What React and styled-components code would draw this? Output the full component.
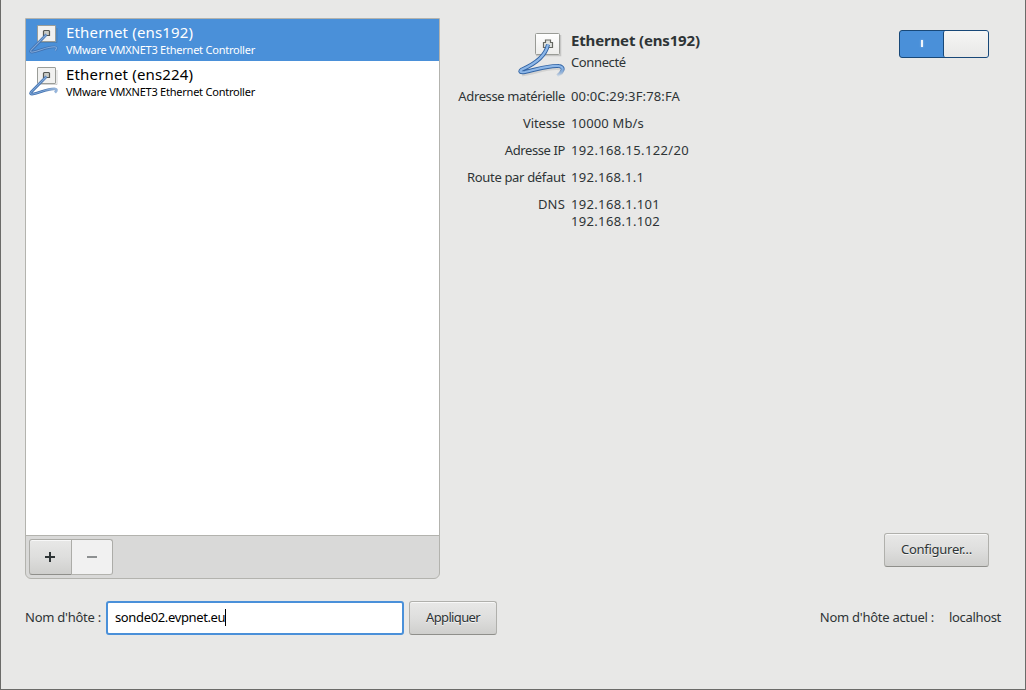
import React from "react";
import styled, { createGlobalStyle } from "styled-components";

const GlobalStyle = createGlobalStyle`
  *, *::before, *::after { box-sizing: border-box; }
  body { margin: 0; background: #e8e8e7; }
`;

const Window = styled.main`
  display: flex;
  flex-direction: column;
  width: 1026px;
  height: 690px;
  padding: 18px 24px 0;
  border: 1px solid #6b6b69;
  border-top: 0;
  background: #e8e8e7;
  color: #2e3436;
  font: 13px/17px "Noto Sans", sans-serif;
  white-space: nowrap;
`;

const Text = styled.span`
  letter-spacing: ${(p) => p.$track || 0}px;
`;

const Columns = styled.div`
  display: flex;
  height: 561px;
`;

const DevicePanel = styled.section`
  display: flex;
  flex-direction: column;
  width: 415px;
  border: 1px solid #b3b3ae;
  border-radius: 0 0 6px 6px;
  background: #d9d9d8;
  overflow: hidden;
`;

const DeviceList = styled.ul`
  flex: 1;
  margin: 0;
  padding: 0;
  list-style: none;
  background: #fff;
`;

const DeviceRow = styled.li`
  display: flex;
  align-items: center;
  gap: 6px;
  height: 42px;
  padding-left: 2px;
  background: ${(p) => (p.$selected ? "#4a90d9" : "#fff")};
  color: ${(p) => (p.$selected ? "#fff" : "#000")};
`;

const DeviceText = styled.div`
  display: flex;
  flex-direction: column;
  padding-bottom: 1px;
`;

const DeviceName = styled(Text)`
  font-size: 15px;
  line-height: 19px;
`;

const DeviceModel = styled(Text)`
  font-size: 11px;
  line-height: 15px;
`;

const Toolbar = styled.div`
  display: flex;
  height: 43px;
  padding: 3px;
  border-top: 1px solid #b3b3ae;
`;

const ToolButton = styled.button`
  display: flex;
  align-items: center;
  justify-content: center;
  width: ${(p) => (p.disabled ? 41 : 43)}px;
  height: 36px;
  padding: 0 ${(p) => (p.disabled ? 0 : 2)}px 0 0;
  border: 1px solid #acaca8;
  border-bottom-color: ${(p) => (p.disabled ? "#b3b3ae" : "#8f8f8b")};
  border-left-width: ${(p) => (p.disabled ? 0 : 1)}px;
  border-radius: ${(p) => (p.disabled ? "0 3px 3px 0" : "3px 0 0 3px")};
  background: ${(p) => (p.disabled ? "#f1f1f1" : "linear-gradient(#e8e8e7, #dededd 50%, #cfcfcd)")};
  box-shadow: ${(p) => (p.disabled ? "none" : "inset 0 1px #f8f8f8")};
  color: ${(p) => (p.disabled ? "#8d9091" : "#2e3436")};
`;

const Details = styled.section`
  display: flex;
  flex: 1;
  flex-direction: column;
  padding: 11px 12px 12px 18px;
`;

const DetailsHeader = styled.header`
  display: flex;
  height: 48px;
  padding-left: 59px;
`;

const Heading = styled.div`
  display: flex;
  flex: 1;
  flex-direction: column;
  padding: 1px 0 0 6px;
`;

const Title = styled(Text)`
  font-size: 15px;
  font-weight: 700;
  line-height: 20px;
`;

const Status = styled(Text)`
  line-height: 24px;
`;

const Switch = styled.button`
  display: flex;
  width: 90px;
  height: 28px;
  margin-top: 1px;
  padding: 0;
  border: 1px solid #184878;
  border-radius: 3px;
  background: #4a90d9;
`;

const SwitchMark = styled.span`
  display: flex;
  flex: 1;
  align-items: center;
  justify-content: center;
  height: 100%;
  padding: 0 0 1px;
  &::before {
    content: "";
    width: 2px;
    height: 7px;
    background: #f0f6fc;
    box-shadow: 0 0 2px #9fc4ec;
  }
`;

const SwitchKnob = styled.span`
  width: 45px;
  height: 100%;
  border-left: 1px solid #184878;
  border-radius: 2px;
  background: linear-gradient(#f6f6f5, #e8e8e7);
`;

const Properties = styled.dl`
  display: grid;
  grid-template-columns: 107px auto;
  column-gap: 6px;
  row-gap: 10px;
  margin: 11px 0 0;
  justify-content: start;
`;

const Label = styled.dt`
  display: flex;
  justify-content: flex-end;
`;

const Value = styled.dd`
  display: flex;
  flex-direction: column;
  margin: 0;
`;

const Button = styled.button`
  width: ${(p) => p.$width}px;
  height: 34px;
  padding: 0 0 1px;
  border: 1px solid #b0b0ac;
  border-bottom-color: #8f8f8b;
  border-radius: 3px;
  background: linear-gradient(#e8e8e7, #dededd 50%, #cfcfcd);
  box-shadow: inset 0 1px #f8f8f8;
  color: #2e3436;
  font: inherit;
  text-shadow: 0 1px #f3f3f3;
`;

const ConfigureArea = styled.div`
  display: flex;
  justify-content: flex-end;
  margin-top: auto;
`;

const HostBar = styled.footer`
  display: flex;
  align-items: center;
  height: 34px;
  margin-top: 22px;
`;

const HostLabel = styled.label`
  width: 81px;
  padding-bottom: 2px;
`;

const HostEntry = styled.div`
  display: flex;
  align-items: center;
  width: 298px;
  height: 34px;
  margin-right: 5px;
  padding: 0 0 1px 7px;
  border: 2px solid #4a90d9;
  border-radius: 3px;
  background: #fff;
  color: #000;
`;

const Caret = styled.span`
  width: 1px;
  height: 17px;
  background: #000;
`;

const CurrentHost = styled.div`
  display: flex;
  gap: 15px;
  margin-left: auto;
  padding-bottom: 2px;
`;

function SmallEthernetIcon({ id }) {
  const cable = "M18.500 10.500L3 26.200Q1.500 28.500 5 28C12 26.500 20 22.500 26.500 22.800Q30.500 23.200 27 26.500";
  return (
    <svg width="32" height="32" viewBox="0 0 32 32" fill="none">
      <defs>
        <linearGradient id={id} x1="14" y1="0" x2="30" y2="0" gradientUnits="userSpaceOnUse">
          <stop stopColor="#3f6fae" />
          <stop offset="1" stopColor="#3f6fae" stopOpacity=".45" />
        </linearGradient>
      </defs>
      <path d="M11 18.500h18V4" stroke="#555" strokeOpacity=".25" />
      <rect x="9.500" y="1.500" width="18" height="16" rx=".5" fill="#f1f1f0" stroke="#9b9d98" />
      <path d="M15.500 11.500v-4.500l1-.5h4l1 .5v4.500z" fill="#c9cbc6" stroke="#555753" strokeWidth="1.200" />
      <path d={cable} stroke={`url(#${id})`} strokeWidth="2.700" strokeLinejoin="round" />
      <path d={cable} stroke="#8fb5e2" strokeOpacity=".8" strokeWidth="1.100" strokeLinejoin="round" />
    </svg>
  );
}

function EthernetIcon() {
  const cable = "M31 15.500C29 25.500 20 34 5 40.500C2 42.500 3 43.800 8 43C20 40.500 32 36 42 37";
  const tail = "M42 37C48 38 46 43 40.500 47";
  return (
    <svg width="48" height="48" viewBox="0 0 48 48" fill="none">
      <defs>
        <linearGradient id="plate" x1="0" y1="0" x2="0" y2="1">
          <stop stopColor="#fff" />
          <stop offset="1" stopColor="#ececea" />
        </linearGradient>
        <linearGradient id="tail-edge" x1="0" y1="39" x2="0" y2="47" gradientUnits="userSpaceOnUse">
          <stop stopColor="#3465a4" />
          <stop offset="1" stopColor="#3465a4" stopOpacity="0" />
        </linearGradient>
        <linearGradient id="tail-core" x1="0" y1="39" x2="0" y2="47" gradientUnits="userSpaceOnUse">
          <stop stopColor="#8db7e8" />
          <stop offset="1" stopColor="#8db7e8" stopOpacity=".2" />
        </linearGradient>
      </defs>
      <path d="M19 26.500h24.500V6" stroke="#777" strokeOpacity=".3" strokeWidth="1.500" />
      <rect x="18.500" y="4.500" width="24" height="21" rx="1" fill="url(#plate)" stroke="#999b96" />
      <path d="M26.500 18.500v-5h2v-2.500h5v2.500h2v5z" fill="#e3e5e1" stroke="#666862" strokeWidth="1.200" />
      <path d="M5 46c12-1 26-8 38-6" stroke="#555" strokeOpacity=".15" strokeWidth="2.500" />
      <path d={tail} stroke="url(#tail-edge)" strokeWidth="4" />
      <path d={cable} stroke="#3465a4" strokeWidth="4" strokeLinejoin="round" />
      <path d={cable} stroke="#8db7e8" strokeWidth="2.200" strokeLinejoin="round" />
      <path d={tail} stroke="url(#tail-core)" strokeWidth="2.200" />
    </svg>
  );
}

const devices = [
  { name: "Ethernet (ens192)", selected: true },
  { name: "Ethernet (ens224)", selected: false },
];

const properties = [
  { label: "Adresse matérielle", track: -0.38, values: ["00:0C:29:3F:78:FA"], valueTrack: 0.14 },
  { label: "Vitesse", track: -0.15, values: ["10000 Mb/s"], valueTrack: 0.15 },
  { label: "Adresse IP", track: -0.4, values: ["192.168.15.122/20"], valueTrack: 0.36 },
  { label: "Route par défaut", track: -0.33, values: ["192.168.1.1"], valueTrack: 0.31 },
  { label: "DNS", track: 0.2, values: ["192.168.1.101", "192.168.1.102"], valueTrack: 0.33 },
];

export default function App() {
  return (
    <>
      <GlobalStyle />
      <Window>
        <Columns>
          <DevicePanel>
            <DeviceList>
              {devices.map((d) => (
                <DeviceRow key={d.name} $selected={d.selected}>
                  <SmallEthernetIcon id={d.selected ? "cable-192" : "cable-224"} />
                  <DeviceText>
                    <DeviceName $track={0.17}>{d.name}</DeviceName>
                    <DeviceModel $track={-0.23}>VMware VMXNET3 Ethernet Controller</DeviceModel>
                  </DeviceText>
                </DeviceRow>
              ))}
            </DeviceList>
            <Toolbar>
              <ToolButton aria-label="Ajouter">
                <svg width="10" height="10" stroke="currentColor" strokeWidth="2"><path d="M0 5h10M5 0v10" /></svg>
              </ToolButton>
              <ToolButton aria-label="Supprimer" disabled>
                <svg width="10" height="10" stroke="currentColor" strokeWidth="2"><path d="M0 5h10" /></svg>
              </ToolButton>
            </Toolbar>
          </DevicePanel>
          <Details>
            <DetailsHeader>
              <EthernetIcon />
              <Heading>
                <Title $track={-0.16}>Ethernet (ens192)</Title>
                <Status $track={-0.38}>Connecté</Status>
              </Heading>
              <Switch aria-label="Activer"><SwitchMark /><SwitchKnob /></Switch>
            </DetailsHeader>
            <Properties>
              {properties.map((p) => (
                <React.Fragment key={p.label}>
                  <Label><Text $track={p.track}>{p.label}</Text></Label>
                  <Value>{p.values.map((v) => <Text key={v} $track={p.valueTrack}>{v}</Text>)}</Value>
                </React.Fragment>
              ))}
            </Properties>
            <ConfigureArea>
              <Button $width={105}><Text $track={-0.27}>Configurer…</Text></Button>
            </ConfigureArea>
          </Details>
        </Columns>
        <HostBar>
          <HostLabel><Text $track={-0.25}>Nom d'hôte :</Text></HostLabel>
          <HostEntry><Text $track={-0.36}>sonde02.evpnet.eu</Text><Caret /></HostEntry>
          <Button $width={88}><Text $track={-0.65}>Appliquer</Text></Button>
          <CurrentHost><Text $track={-0.27}>Nom d'hôte actuel :</Text><Text $track={-0.33}>localhost</Text></CurrentHost>
        </HostBar>
      </Window>
    </>
  );
}
